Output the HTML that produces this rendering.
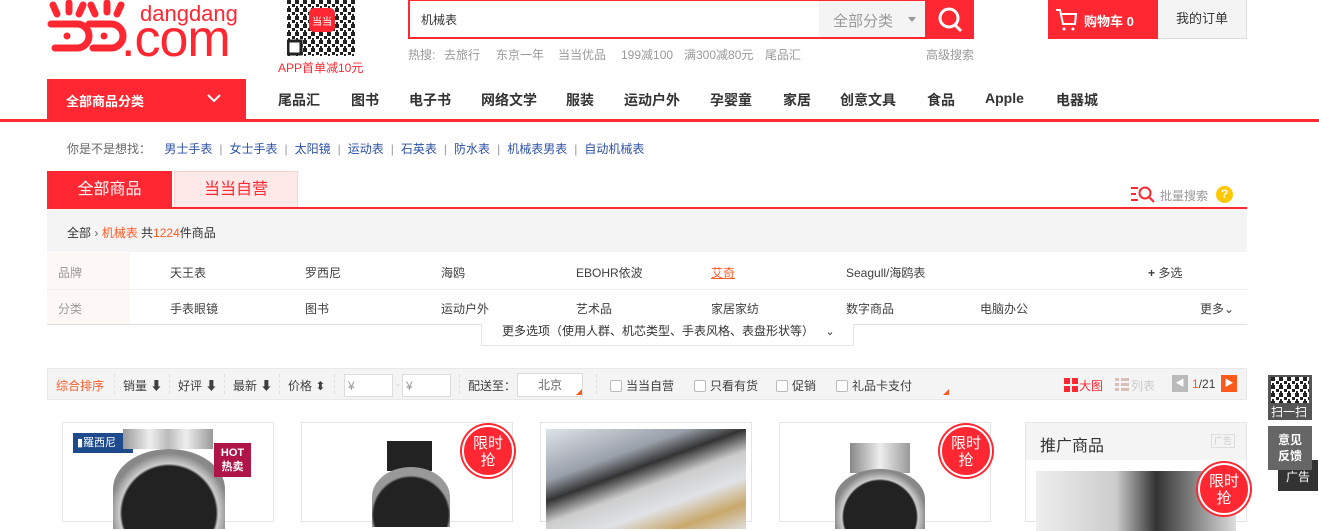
<!DOCTYPE html>
<html><head><meta charset="utf-8"><style>
*{margin:0;padding:0;box-sizing:border-box}
body{width:1319px;height:491px;overflow:hidden;background:#fff;font-family:"Liberation Sans","Noto Sans CJK SC",sans-serif;font-size:12px;color:#333;position:relative}
.a{position:absolute;white-space:nowrap}
.red{background:#ff2832}
.nav span{position:absolute;top:90px;font-size:14px;font-weight:bold;color:#333}
.hot span{position:absolute;top:0}
.lk span{color:#2e51a6}
.lk i{color:#999;font-style:normal;margin:0 7px}
.row span{position:absolute;font-size:12px;color:#404040}
.tb span{position:absolute;top:377px;color:#404040}
.sep{position:absolute;top:374px;height:20px;border-left:1px dashed #ddd}
.card{position:absolute;top:422px;height:100px;border:1px solid #e5e5e5;background:#fff}
.badge{position:absolute;width:52px;height:52px;border-radius:50%;background:#ff2832;border:2px solid #fff;box-shadow:0 0 0 2px #ff2832;color:#fff;font-size:15px;line-height:17px;text-align:center;padding-top:8px}
.cb{display:inline-block;width:12px;height:12px;border:1px solid #bbb;border-radius:2px;background:#fff;vertical-align:-2px;margin-right:4px}
</style></head><body>
<!-- logo -->
<svg class="a" style="left:47px;top:0" width="80" height="55" viewBox="0 0 80 55">
<g fill="none" stroke="#ff2832" stroke-width="7" stroke-linecap="round">
<path d="M6 5 L10 14 M22 3 V12 M36 5 L32 14"/>
<path d="M4 24 H30 A12 12 0 0 1 30 48 H8"/>
<path d="M44 5 L48 14 M60 3 V12 M74 5 L70 14"/>
<path d="M42 24 H64 A12 12 0 0 1 64 48 H46"/>
</g><circle cx="20" cy="36" r="3.5" fill="#ff2832"/><circle cx="57" cy="36" r="3.5" fill="#ff2832"/></svg>
<div class="a" style="left:140px;top:1px;font-size:22px;color:#ff2832">dangdang</div>
<div class="a" style="left:121px;top:12px;font-size:52px;color:#ff2832;line-height:54px;letter-spacing:-1px">.com</div>
<!-- QR -->
<svg class="a" style="left:287px;top:0" width="68" height="56" viewBox="0 0 68 56">
<defs><pattern id="p" width="8" height="8" patternUnits="userSpaceOnUse"><rect width="4" height="4" fill="#222"/><rect x="5" y="4" width="3" height="3" fill="#222"/><rect x="1" y="6" width="2" height="2" fill="#222"/></pattern></defs>
<rect width="68" height="56" fill="#fff"/>
<rect width="68" height="56" fill="url(#p)"/>
<rect x="1" y="41" width="13" height="13" fill="#fff" stroke="#222" stroke-width="3"/>
<rect x="22" y="8" width="26" height="24" rx="5" fill="#ff2832"/>
<text x="35" y="25" font-size="10" fill="#fff" text-anchor="middle" font-family="Liberation Sans">当当</text></svg>
<div class="a" style="left:278px;top:59px;font-size:12px;color:#ff2832">APP首单减10元</div>
<!-- search -->
<div class="a" style="left:408px;top:0;width:566px;height:39px;border:2px solid #ff2832;border-top:1px solid #ff2832"></div>
<div class="a" style="left:421px;top:11px;font-size:12px;color:#333">机械表</div>
<div class="a" style="left:819px;top:1px;width:106px;height:36px;background:#f4f4f4"></div>
<div class="a" style="left:833px;top:10px;font-size:15px;color:#999">全部分类</div>
<div class="a" style="left:908px;top:17px;border:4px solid transparent;border-top:5px solid #999"></div>
<div class="a red" style="left:925px;top:0;width:49px;height:39px"></div>
<svg class="a" style="left:936px;top:6px" width="28" height="28"><circle cx="13" cy="12" r="9" fill="none" stroke="#fff" stroke-width="3"/><path d="M19 19 L25 25" stroke="#fff" stroke-width="3"/></svg>
<div class="a hot" style="left:0;top:46px;width:1000px;font-size:12px;color:#999"><span style="left:408px">热搜:</span><span style="left:444px">去旅行</span><span style="left:496px">东京一年</span><span style="left:558px">当当优品</span><span style="left:621px">199减100</span><span style="left:684px">满300减80元</span><span style="left:765px">尾品汇</span></div>
<div class="a" style="left:926px;top:46px;color:#999">高级搜索</div>
<!-- cart -->
<div class="a red" style="left:1048px;top:0;width:110px;height:39px"></div>
<svg class="a" style="left:1055px;top:7px" width="24" height="24"><path d="M1 3 H5 L8 17 H20 L21 7 H7" fill="none" stroke="#fff" stroke-width="2"/><circle cx="9" cy="22" r="1.5" fill="#fff"/><circle cx="18" cy="22" r="1.5" fill="#fff"/></svg>
<div class="a" style="left:1084px;top:11px;font-size:13px;font-weight:bold;color:#fff">购物车 0</div>
<div class="a" style="left:1158px;top:0;width:89px;height:39px;background:#f4f4f4;border:1px solid #ddd;border-left:0;border-top:0;font-size:13px;color:#333;text-align:center;line-height:38px">我的订单</div>
<!-- nav -->
<div class="a red" style="left:47px;top:79px;width:199px;height:41px"></div>
<div class="a" style="left:66px;top:91px;font-size:13px;font-weight:bold;color:#fff">全部商品分类</div>
<svg class="a" style="left:207px;top:93px" width="14" height="10"><path d="M1 2 L7 8 L13 2" fill="none" stroke="#fff" stroke-width="2"/></svg>
<div class="nav"><span style="left:278px">尾品汇</span><span style="left:351px">图书</span><span style="left:409px">电子书</span><span style="left:481px">网络文学</span><span style="left:566px">服装</span><span style="left:624px">运动户外</span><span style="left:710px">孕婴童</span><span style="left:783px">家居</span><span style="left:840px">创意文具</span><span style="left:927px">食品</span><span style="left:985px">Apple</span><span style="left:1056px">电器城</span></div>
<div class="a red" style="left:0;top:119px;width:1319px;height:3px"></div>
<!-- did you mean -->
<div class="a lk" style="left:67px;top:140px;color:#666">你是不是想找：&nbsp;&nbsp;&nbsp; <span>男士手表</span><i>|</i><span>女士手表</span><i>|</i><span>太阳镜</span><i>|</i><span>运动表</span><i>|</i><span>石英表</span><i>|</i><span>防水表</span><i>|</i><span>机械表男表</span><i>|</i><span>自动机械表</span></div>
<!-- tabs -->
<div class="a red" style="left:47px;top:171px;width:125px;height:37px;color:#fff;font-size:16px;text-align:center;line-height:38px">全部商品</div>
<div class="a" style="left:174px;top:171px;width:124px;height:37px;background:#ffe9e9;border:1px solid #ffd0d0;color:#ff2832;font-size:16px;text-align:center;line-height:36px">当当自营</div>
<svg class="a" style="left:1130px;top:185px" width="28" height="18"><path d="M1 3h7M1 9h5M1 15h7" stroke="#ff2832" stroke-width="2"/><circle cx="15" cy="8" r="5.5" fill="none" stroke="#ff2832" stroke-width="2"/><path d="M19 12 L24 17" stroke="#ff2832" stroke-width="2"/></svg>
<div class="a" style="left:1160px;top:187px;color:#999">批量搜索</div>
<div class="a" style="left:1216px;top:186px;width:17px;height:17px;border-radius:50%;background:#ffc800;color:#fff;font-weight:bold;text-align:center;line-height:17px;font-size:12px">?</div>
<div class="a red" style="left:47px;top:207px;width:1200px;height:2px"></div>
<div class="a" style="left:47px;top:209px;width:1200px;height:43px;background:#f4f4f4"></div>
<div class="a" style="left:67px;top:224px;color:#333">全部 <span style="color:#666">›</span> <span style="color:#ff5a26">机械表</span> 共<span style="color:#ff5a26">1224</span>件商品</div>
<!-- filter rows -->
<div class="a" style="left:47px;top:253px;width:83px;height:71px;background:#fdf8f5"></div>
<div class="a" style="left:47px;top:289px;width:1200px;border-top:1px dotted #e5e5e5"></div>
<div class="a" style="left:47px;top:324px;width:1200px;border-top:1px solid #e0e0e0"></div>
<div class="row">
<span style="left:58px;top:264px;color:#999">品牌</span><span style="left:170px;top:264px">天王表</span><span style="left:305px;top:264px">罗西尼</span><span style="left:441px;top:264px">海鸥</span><span style="left:576px;top:264px">EBOHR依波</span><span style="left:711px;top:264px;color:#ff5a26;text-decoration:underline">艾奇</span><span style="left:846px;top:264px">Seagull/海鸥表</span><span style="left:1148px;top:264px"><b>+</b> 多选</span>
<span style="left:58px;top:300px;color:#999">分类</span><span style="left:170px;top:300px">手表眼镜</span><span style="left:305px;top:300px">图书</span><span style="left:441px;top:300px">运动户外</span><span style="left:576px;top:300px">艺术品</span><span style="left:711px;top:300px">家居家纺</span><span style="left:846px;top:300px">数字商品</span><span style="left:980px;top:300px">电脑办公</span><span style="left:1200px;top:300px">更多⌄</span>
</div>
<div class="a" style="left:481px;top:324px;width:373px;height:22px;border:1px solid #e5e5e5;border-top:0;background:#fff;font-size:12px;color:#333;padding-left:20px;line-height:14px">更多选项（使用人群、机芯类型、手表风格、表盘形状等） <span style="font-size:11px;margin-left:8px">⌄</span></div>
<!-- toolbar -->
<div class="a" style="left:47px;top:368px;width:1200px;height:32px;background:#f4f4f4;border:1px solid #e8e8e8"></div>
<div class="tb">
<span style="left:56px;color:#ff5a26">综合排序</span><span style="left:123px">销量 ⬇</span><span style="left:178px">好评 ⬇</span><span style="left:233px">最新 ⬇</span><span style="left:288px">价格 ⬍</span>
<span style="left:468px">配送至：</span><span style="left:610px"><i class="cb"></i>当当自营</span><span style="left:694px"><i class="cb"></i>只看有货</span><span style="left:776px"><i class="cb"></i>促销</span><span style="left:836px"><i class="cb"></i>礼品卡支付</span>
<span style="left:1079px;color:#ff2832">大图</span><span style="left:1131px;color:#ccc">列表</span><span style="left:1192px"><b style="color:#ff5a26;font-weight:normal">1</b>/21</span>
</div>
<div class="sep" style="left:114px"></div><div class="sep" style="left:169px"></div><div class="sep" style="left:224px"></div><div class="sep" style="left:279px"></div><div class="sep" style="left:334px"></div><div class="sep" style="left:459px"></div><div class="sep" style="left:596px"></div>
<div class="a" style="left:344px;top:374px;width:49px;height:23px;background:#fff;border:1px solid #ddd;color:#999;padding:4px 3px">¥</div>
<div class="a" style="left:396px;top:377px;color:#ccc">-</div>
<div class="a" style="left:402px;top:374px;width:49px;height:23px;background:#fff;border:1px solid #ddd;color:#999;padding:4px 3px">¥</div>
<div class="a" style="left:517px;top:373px;width:66px;height:24px;background:#fff;border:1px solid #ddd;color:#666;text-align:center;line-height:22px">北京</div>
<div class="a" style="left:576px;top:389px;border:3px solid transparent;border-right-color:#ff5a26;border-bottom-color:#ff5a26"></div>
<div class="a" style="left:943px;top:389px;border:3px solid transparent;border-right-color:#ff5a26;border-bottom-color:#ff5a26"></div>
<svg class="a" style="left:1064px;top:378px" width="14" height="14"><rect width="6" height="6" fill="#ff2832"/><rect x="8" width="6" height="6" fill="#ff2832"/><rect y="8" width="6" height="6" fill="#ff2832"/><rect x="8" y="8" width="6" height="6" fill="#ff2832"/></svg>
<svg class="a" style="left:1115px;top:378px" width="14" height="14" fill="#d9bfb8"><rect width="4" height="3"/><rect x="6" width="8" height="3"/><rect y="5" width="4" height="3"/><rect x="6" y="5" width="8" height="3"/><rect y="10" width="4" height="3"/><rect x="6" y="10" width="8" height="3"/></svg>
<div class="a" style="left:1172px;top:375px;width:16px;height:17px;background:#bbb;color:#fff;font-size:9px;text-align:center;line-height:17px">◀</div>
<div class="a" style="left:1221px;top:375px;width:16px;height:17px;background:#ff5a1a;color:#fff;font-size:9px;text-align:center;line-height:17px">▶</div>
<!-- products -->
<div class="card" style="left:62px;width:212px">
<div class="a" style="left:10px;top:10px;width:60px;height:20px;background:#1c4a8c;color:#fff;font-size:11px;line-height:20px;padding-left:4px">▮羅西尼</div>
<div class="a" style="left:60px;top:6px;width:90px;height:20px;background:linear-gradient(90deg,#999,#eee 30%,#bbb 50%,#eee 70%,#999)"></div>
<div class="a" style="left:50px;top:26px;width:112px;height:80px;border-radius:50% 50% 0 0;background:radial-gradient(circle at 50% 80%,#222 55%,#ccc 58%,#888 70%)"></div>
<div class="a" style="left:151px;top:20px;width:37px;height:34px;background:#b0154a;color:#fff;font-size:11px;text-align:center;line-height:14px;padding-top:3px;font-weight:bold">HOT<br>热卖</div>
</div>
<div class="card" style="left:301px;width:212px">
<div class="a" style="left:85px;top:18px;width:45px;height:30px;background:#222"></div>
<div class="a" style="left:70px;top:44px;width:78px;height:60px;border-radius:50% 50% 0 0;background:radial-gradient(circle at 50% 80%,#222 60%,#999 64%)"></div>
<div class="badge" style="left:160px;top:2px">限时<br>抢</div>
</div>
<div class="card" style="left:540px;width:212px">
<div class="a" style="left:5px;top:6px;width:200px;height:100px;background:linear-gradient(160deg,#dfe3ea,#9aa0aa 30%,#333 42%,#ccc 55%,#e0e2e6 70%,#c9a86b 85%,#ddd)"></div>
</div>
<div class="card" style="left:779px;width:212px">
<div class="a" style="left:70px;top:20px;width:60px;height:30px;background:linear-gradient(90deg,#888,#eee,#999)"></div>
<div class="a" style="left:55px;top:46px;width:90px;height:60px;border-radius:50% 50% 0 0;background:radial-gradient(circle at 50% 80%,#222 55%,#ccc 58%,#888 70%)"></div>
<div class="badge" style="left:160px;top:2px">限时<br>抢</div>
</div>
<div class="card" style="left:1025px;width:222px;background:#fff">
<div class="a" style="left:0;top:0;width:220px;height:37px;background:#f4f4f4"></div>
<div class="a" style="left:14px;top:9px;font-size:16px;color:#333">推广商品</div>
<div class="a" style="left:185px;top:11px;width:24px;height:14px;border:1px solid #ddd;color:#ccc;font-size:9px;text-align:center;line-height:12px">广告</div>
<div class="a" style="left:10px;top:48px;width:200px;height:60px;background:linear-gradient(90deg,#eee,#ccc 40%,#333 60%,#ddd)"></div>
<div class="badge" style="left:172px;top:40px">限时<br>抢</div>
</div>
<!-- right widgets -->
<div class="a" style="left:1268px;top:375px;width:44px;height:45px;background:#555"></div>
<svg class="a" style="left:1271px;top:377px" width="38" height="26"><rect width="38" height="26" fill="#fff"/><rect width="38" height="26" fill="url(#p)"/></svg>
<div class="a" style="left:1271px;top:403px;color:#fff;font-size:12px">扫一扫</div>
<div class="a" style="left:1278px;top:460px;width:40px;height:31px;background:#333;color:#fff;text-align:center;line-height:34px;font-size:12px">广告</div>
<div class="a" style="left:1268px;top:426px;width:44px;height:44px;background:#666;color:#fff;font-size:12px;text-align:center;line-height:16px;padding-top:6px;font-weight:bold">意见<br>反馈</div>
</body></html>
